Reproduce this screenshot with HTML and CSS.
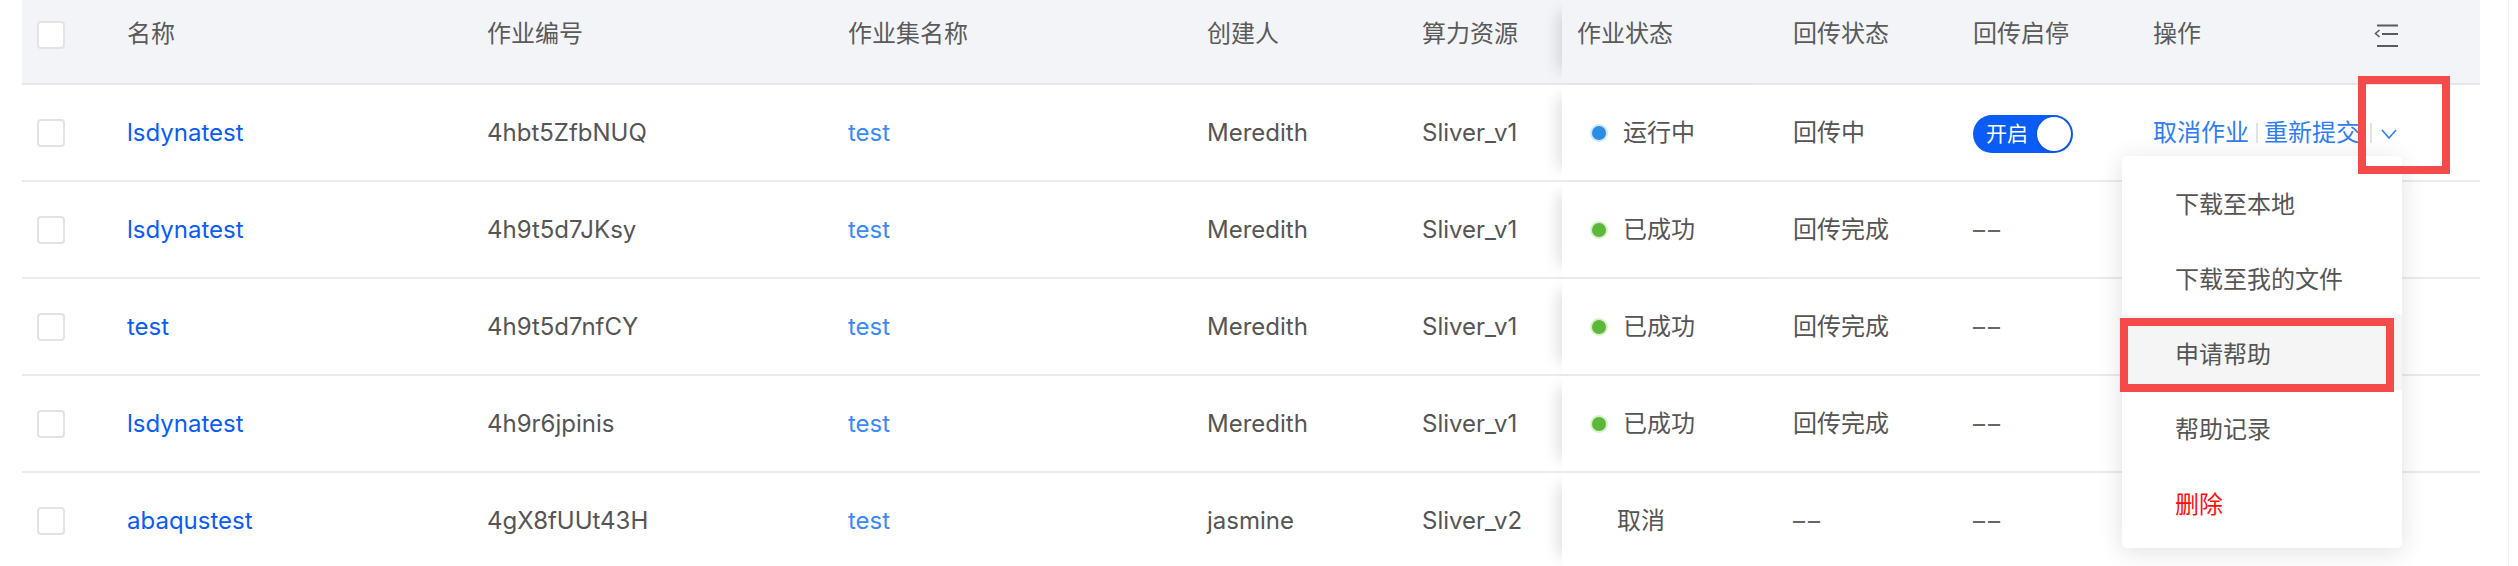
FILE: index.html
```html
<!DOCTYPE html>
<html lang="zh-CN">
<head>
<meta charset="utf-8">
<title>作业列表</title>
<link rel="stylesheet" href="styles.css">
</head>
<body>
<div class="page">
  <div class="table">
    <div class="row head">
      <div class="cell"><span class="checkbox"></span></div>
      <div class="cell">名称</div>
      <div class="cell">作业编号</div>
      <div class="cell">作业集名称</div>
      <div class="cell">创建人</div>
      <div class="cell">算力资源</div>
      <div class="cell fix status-h">作业状态</div>
      <div class="cell">回传状态</div>
      <div class="cell">回传启停</div>
      <div class="cell">操作</div>
      <div class="cell setting">
        <svg width="26" height="24" viewBox="0 0 26 24" fill="none" stroke="#5a5a5a" stroke-width="2">
          <line x1="3" y1="1.5" x2="24" y2="1.5"/>
          <polyline points="5.5,6 1.5,9.5 5.5,13" stroke-width="1.6"/>
          <line x1="8" y1="10" x2="24" y2="10"/>
          <line x1="3" y1="22" x2="24" y2="22"/>
        </svg>
      </div>
    </div>

    <div class="row">
      <div class="cell"><span class="checkbox"></span></div>
      <div class="cell"><a class="name-link">lsdynatest</a></div>
      <div class="cell">4hbt5ZfbNUQ</div>
      <div class="cell"><a class="set-link">test</a></div>
      <div class="cell">Meredith</div>
      <div class="cell">Sliver_v1</div>
      <div class="cell fix status"><span class="dot dot-run"></span>运行中</div>
      <div class="cell">回传中</div>
      <div class="cell"><span class="switch"><span class="switch-text">开启</span><span class="knob"></span></span></div>
      <div class="cell ops">
        <a class="op-link">取消作业</a><span class="sep sep1"></span><a class="op-link">重新提交</a><span class="sep sep2"></span>
        <svg class="chev" width="16" height="10" viewBox="0 0 16 10" fill="none" stroke="#2f7df6" stroke-width="1.6"><polyline points="1,1 8,9 15,1"/></svg>
      </div>
      <div class="cell"></div>
    </div>

    <div class="row">
      <div class="cell"><span class="checkbox"></span></div>
      <div class="cell"><a class="name-link">lsdynatest</a></div>
      <div class="cell">4h9t5d7JKsy</div>
      <div class="cell"><a class="set-link">test</a></div>
      <div class="cell">Meredith</div>
      <div class="cell">Sliver_v1</div>
      <div class="cell fix status"><span class="dot dot-ok"></span>已成功</div>
      <div class="cell">回传完成</div>
      <div class="cell"><span class="dash">––</span></div>
      <div class="cell"></div>
      <div class="cell"></div>
    </div>

    <div class="row">
      <div class="cell"><span class="checkbox"></span></div>
      <div class="cell"><a class="name-link">test</a></div>
      <div class="cell">4h9t5d7nfCY</div>
      <div class="cell"><a class="set-link">test</a></div>
      <div class="cell">Meredith</div>
      <div class="cell">Sliver_v1</div>
      <div class="cell fix status"><span class="dot dot-ok"></span>已成功</div>
      <div class="cell">回传完成</div>
      <div class="cell"><span class="dash">––</span></div>
      <div class="cell"></div>
      <div class="cell"></div>
    </div>

    <div class="row">
      <div class="cell"><span class="checkbox"></span></div>
      <div class="cell"><a class="name-link">lsdynatest</a></div>
      <div class="cell">4h9r6jpinis</div>
      <div class="cell"><a class="set-link">test</a></div>
      <div class="cell">Meredith</div>
      <div class="cell">Sliver_v1</div>
      <div class="cell fix status"><span class="dot dot-ok"></span>已成功</div>
      <div class="cell">回传完成</div>
      <div class="cell"><span class="dash">––</span></div>
      <div class="cell"></div>
      <div class="cell"></div>
    </div>

    <div class="row">
      <div class="cell"><span class="checkbox"></span></div>
      <div class="cell"><a class="name-link">abaqustest</a></div>
      <div class="cell">4gX8fUUt43H</div>
      <div class="cell"><a class="set-link">test</a></div>
      <div class="cell">jasmine</div>
      <div class="cell">Sliver_v2</div>
      <div class="cell fix status status-plain">取消</div>
      <div class="cell"><span class="dash">––</span></div>
      <div class="cell"><span class="dash">––</span></div>
      <div class="cell"></div>
      <div class="cell"></div>
    </div>
  </div>

  <div class="menu">
    <div class="menu-item">下载至本地</div>
    <div class="menu-item">下载至我的文件</div>
    <div class="menu-item active">申请帮助</div>
    <div class="menu-item">帮助记录</div>
    <div class="menu-item danger">删除</div>
  </div>

  <div class="mark mark-more"></div>
  <div class="mark mark-help"></div>
</div>
</body>
</html>
```

FILE: styles.css
```css
* {
  box-sizing: border-box;
}

html, body {
  margin: 0;
  padding: 0;
  background: #ffffff;
}

body {
  font-family: "Inter", "Noto Sans CJK SC", sans-serif;
  font-size: 24px;
  color: #555555;
}

.page {
  position: relative;
  width: 2518px;
  height: 566px;
  overflow: hidden;
  padding-left: 22px;
}

.page::after {
  content: "";
  position: absolute;
  top: 0;
  bottom: 0;
  left: 2508px;
  width: 1px;
  background: #f1f1f1;
}

.table {
  width: 2458px;
}

.row {
  display: grid;
  grid-template-columns: 105px 360px 361px 359px 215px 140px 231px 180px 180px 221px 106px;
  height: 97px;
  border-bottom: 2px solid #ebebeb;
  background: #ffffff;
}

.row.head {
  height: 85px;
  background: #f3f4f8;
  border-bottom: 2px solid #e6e7ea;
}

.cell {
  display: flex;
  align-items: center;
  white-space: nowrap;
  line-height: 28px;
}

.cell > * {
  flex-shrink: 0;
}

.head .cell {
  align-items: flex-start;
  padding-top: 20px;
  color: #5a5a5a;
}

.row .cell:first-child {
  padding-left: 15px;
}

.fix {
  box-shadow: -16px 0 14px -12px rgba(0, 0, 0, 0.13);
}

.status-h {
  padding-left: 15px;
}

.checkbox {
  display: block;
  width: 28px;
  height: 28px;
  border: 2px solid #e3e3e3;
  border-radius: 4px;
  background: #ffffff;
}

.head .checkbox {
  margin-top: 1px;
}

.setting svg {
  margin-top: 4px;
}

.name-link {
  color: #0b5cf5;
}

.set-link {
  color: #3a8af6;
}

.status {
  padding-left: 30px;
}

.status-plain {
  padding-left: 55px;
}

.dot {
  display: block;
  width: 14px;
  height: 14px;
  border-radius: 50%;
  margin-right: 17px;
}

.dot-run {
  background: #2a8ee2;
  box-shadow: 0 0 0 2px #d2e7fb;
}

.dot-ok {
  background: #5cb73b;
  box-shadow: 0 0 0 2px #d9f0cc;
}

.dash {
  letter-spacing: 3px;
  color: #666666;
}

.switch {
  position: relative;
  display: flex;
  align-items: center;
  width: 100px;
  height: 38px;
  border-radius: 19px;
  background: #0a5cf5;
  padding-left: 13px;
  margin-top: 2px;
}

.switch-text {
  color: #ffffff;
  font-size: 21px;
  line-height: 24px;
}

.knob {
  position: absolute;
  right: 2px;
  top: 2px;
  width: 34px;
  height: 34px;
  border-radius: 50%;
  background: #ffffff;
  box-shadow: 0 1px 3px rgba(0, 40, 120, 0.25);
}

.ops {
  overflow: visible;
}

.op-link {
  color: #2f7df6;
}

.sep {
  display: block;
  width: 2px;
  height: 20px;
  background: #e2e2e2;
}

.sep1 {
  margin: 0 6px 0 7px;
}

.sep2 {
  margin: 0 9px 0 10px;
}

.chev {
  display: block;
  margin-top: 2px;
}

.menu {
  position: absolute;
  left: 2122px;
  top: 156px;
  width: 280px;
  padding: 9px 0 8px;
  background: #ffffff;
  border-radius: 5px;
  box-shadow: 0 4px 26px rgba(0, 0, 0, 0.12);
}

.menu-item {
  display: flex;
  align-items: center;
  height: 75px;
  padding-left: 53px;
  color: #555555;
  white-space: nowrap;
}

.menu-item.active {
  background: #f5f5f5;
}

.menu-item.danger {
  color: #ff0d0d;
}

.mark {
  position: absolute;
  border: 8px solid #f44b4a;
}

.mark-more {
  left: 2358px;
  top: 76px;
  width: 92px;
  height: 98px;
}

.mark-help {
  left: 2120px;
  top: 318px;
  width: 274px;
  height: 74px;
}
```
